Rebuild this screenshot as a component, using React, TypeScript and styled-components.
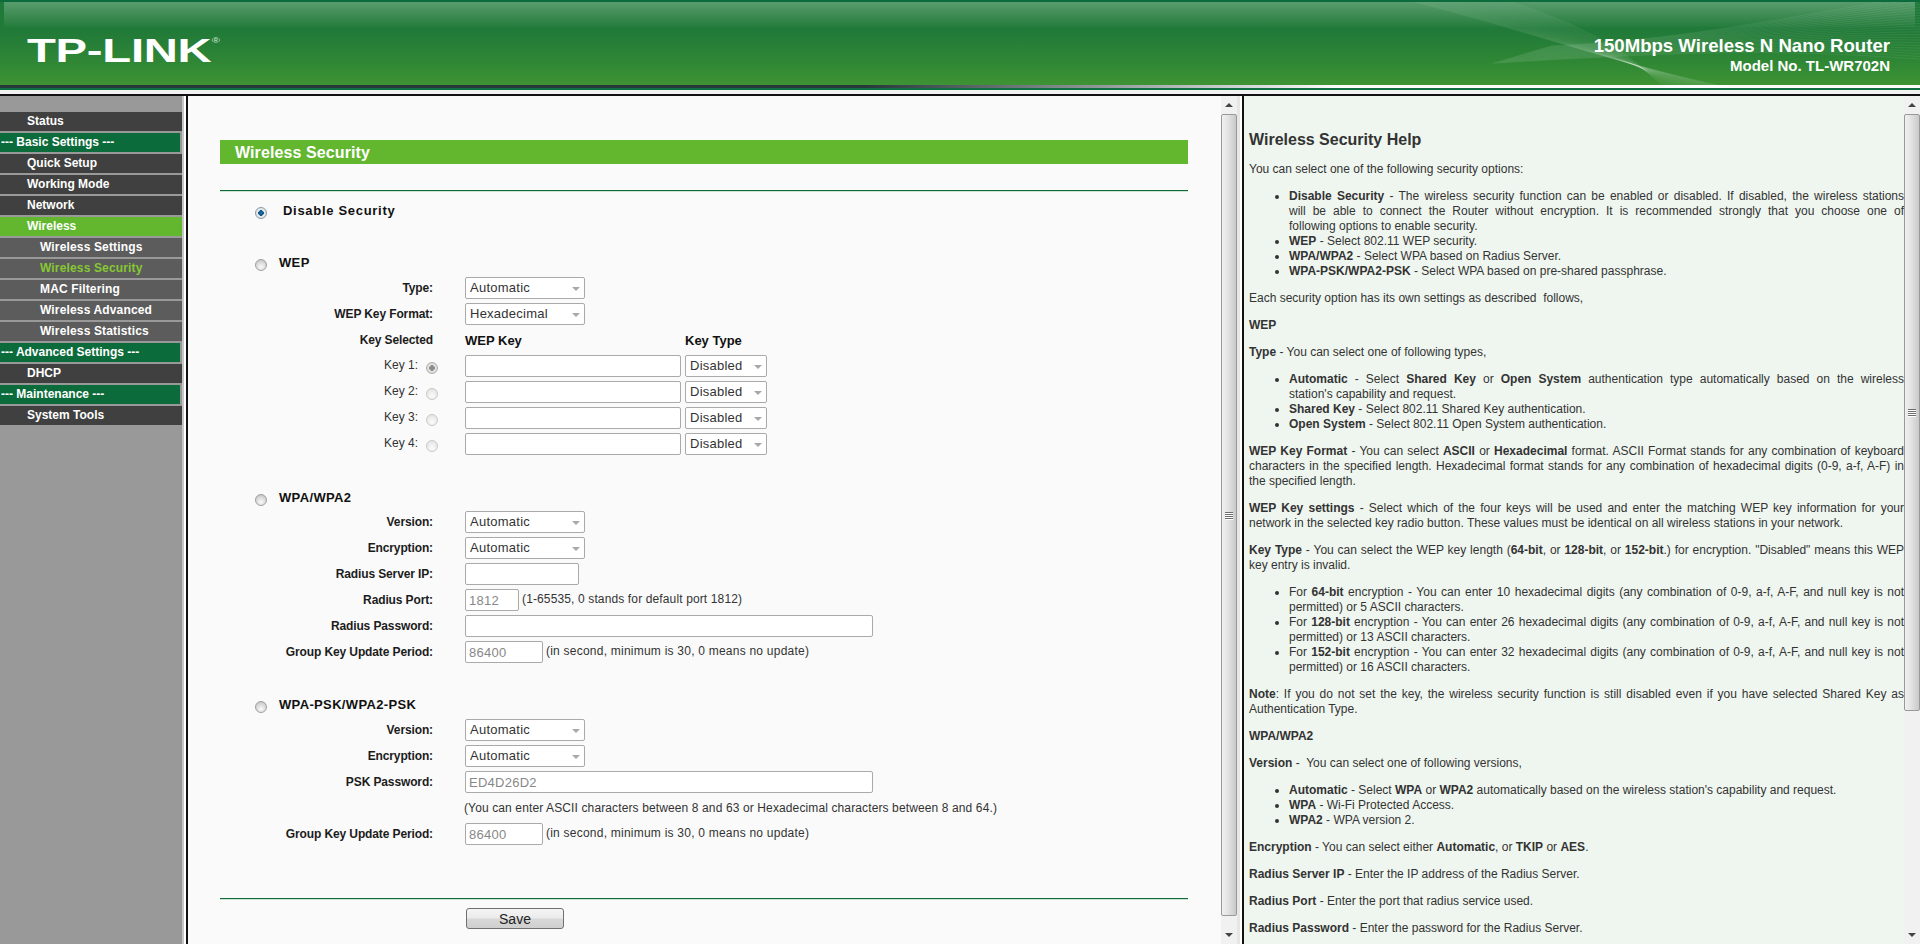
import { createGlobalStyle, styled } from 'styled-components'

const GlobalStyle = createGlobalStyle`
  html, body {
    margin: 0;
    height: 944px;
    overflow: hidden;
    background: #fff;
    font-family: "Liberation Sans", Arial, sans-serif;
    font-size: 12px;
  }
`

const Page = styled.div`
  width: 1920px;
  height: 944px;
  display: flex;
  flex-direction: column;
  overflow: hidden;
`

/* header */
const Banner = styled.header`
  position: relative;
  height: 85px;
  flex: none;
  padding: 0 30px 0 27px;
  display: flex;
  align-items: flex-start;
  justify-content: space-between;
  overflow: hidden;
  background: linear-gradient(#1f7a3a 0, #217a38 30px, #2f8735 60px, #409433 85px);
  border-top: 2px solid #0b6b3c;
  box-sizing: border-box;

  &::before {
    content: '';
    position: absolute;
    top: 0;
    left: 4px;
    right: 5px;
    height: 25px;
    background: linear-gradient(rgba(255, 255, 255, 0.26), rgba(255, 255, 255, 0.02));
  }
`
const Logo = styled.div`
  position: relative;
  margin-top: 29px;
  font-size: 34px;
  line-height: 38px;
  font-weight: 700;
  color: #fff;
  transform: scaleX(1.39);
  transform-origin: left center;
  letter-spacing: -0.2px;

  sup {
    position: absolute;
    left: 133px;
    top: 5px;
    font-size: 8px;
    line-height: 10px;
    font-weight: 400;
    color: #d5e8d5;
  }
`
const Product = styled.div`
  position: relative;
  margin-top: 33px;
  text-align: right;
  color: #fff;
  font-weight: 700;
`
const ProductName = styled.div`
  font-size: 18.6px;
  line-height: 21px;
`
const ModelName = styled.div`
  font-size: 15px;
  line-height: 20px;
`
const Waves = styled.svg`
  position: absolute;
  top: -2px;
  right: 0;
`
const BannerEdge = styled.div`
  height: 9px;
  flex: none;
  background:
    linear-gradient(to right, #26383a 0, #26383a 45%, transparent 70%) 0 0 / 100% 3px no-repeat,
    linear-gradient(#fff 0, #fff 3px, #0f6e42 3px, #0f6e42 5px, #f2f2f2 5px, #f2f2f2 100%);
`
const FrameLine = styled.div`
  height: 2px;
  flex: none;
  background: #111;
`
const Frames = styled.div`
  flex: 1;
  min-height: 0;
  display: flex;
`

/* left menu */
const Menu = styled.nav`
  width: 182px;
  flex: none;
  padding-top: 16px;
  box-sizing: content-box;
  background: #999;
  border-right: 2px solid #c6c6c6;
  margin-right: 2px;
  display: flex;
  flex-direction: column;
  gap: 2px;
`
const MenuItem = styled.div<{ $kind: 'main' | 'group' | 'sub' | 'open' | 'current' }>`
  height: 19px;
  line-height: 19px;
  font-size: 12px;
  font-weight: 700;
  white-space: pre;
  letter-spacing: ${({ $kind }) => ($kind === 'sub' || $kind === 'current' ? '0.15px' : '0')};
  color: ${({ $kind }) => ($kind === 'current' ? '#86c832' : '#fff')};
  padding-left: ${({ $kind }) => ($kind === 'group' ? '1px' : $kind === 'sub' || $kind === 'current' ? '40px' : '27px')};
  margin-right: ${({ $kind }) => ($kind === 'group' ? '2px' : '0')};
  background: ${({ $kind }) =>
    $kind === 'group' ? '#0c6b3b' : $kind === 'open' ? '#62b72f' : $kind === 'main' ? '#404040' : '#5c5c5c'};
`

/* scrollbar, drawn by hand so both frames get the old windows look */
const Scrollbar = styled.div`
  width: 16px;
  flex: none;
  display: flex;
  flex-direction: column;
  background: #f1f1f1;
`
const ArrowBox = styled.div`
  height: 18px;
  flex: none;
  display: flex;
  align-items: center;
  justify-content: center;
`
const Arrow = styled.span<{ $down?: boolean }>`
  width: 0;
  height: 0;
  border-left: 4px solid transparent;
  border-right: 4px solid transparent;
  ${({ $down }) => ($down ? 'border-top: 4px solid #444;' : 'border-bottom: 4px solid #444;')}
`
const Thumb = styled.div<{ $height: number }>`
  height: ${({ $height }) => $height}px;
  flex: none;
  box-sizing: border-box;
  border: 1px solid #999;
  border-radius: 2px;
  background: linear-gradient(to right, #f0f0f0, #e4e4e4 40%, #c9c9c9);
  display: flex;
  flex-direction: column;
  align-items: center;
  justify-content: center;
  gap: 1px;
`
const Grip = styled.span`
  width: 8px;
  height: 1px;
  background: #6d6d6d;
  box-shadow: 0 1px 0 #fff;
`
const Track = styled.div`
  flex: 1;
`

function Bar({ thumb }: { thumb: number }) {
  return (
    <Scrollbar>
      <ArrowBox>
        <Arrow />
      </ArrowBox>
      <Thumb $height={thumb}>
        <Grip />
        <Grip />
        <Grip />
        <Grip />
      </Thumb>
      <Track />
      <ArrowBox>
        <Arrow $down />
      </ArrowBox>
    </Scrollbar>
  )
}

/* main form frame */
const MainFrame = styled.section`
  width: 1054px;
  flex: none;
  display: flex;
  border-left: 2px solid #111;
  background: #fff;
`
const MainScroll = styled.div`
  width: 1033px;
  flex: none;
  height: 848px;
  overflow: hidden;
  box-sizing: border-box;
  background: #fafafa;
  padding: 44px 33px 0 32px;
`
const Sliver = styled.div`
  width: 5px;
  flex: none;
  background: linear-gradient(to right, #e6e6e6 0, #e6e6e6 3px, #fff 3px);
`
const Title = styled.h1`
  margin: 0;
  height: 24px;
  line-height: 26px;
  padding-left: 15px;
  background: #62b72f;
  color: #fff;
  font-size: 16px;
  font-weight: 700;
  letter-spacing: 0.1px;
`
const Rule = styled.div<{ $top: number }>`
  margin-top: ${({ $top }) => $top}px;
  height: 1px;
  background: #0c6b3b;
  border-bottom: 1px solid #cfe2d4;
`
const Head = styled.div<{ $top: number; $gap?: number; $big?: boolean }>`
  margin-top: ${({ $top }) => $top}px;
  height: 20px;
  padding-left: 35px;
  display: flex;
  align-items: center;
  gap: ${({ $gap }) => $gap ?? 12}px;
  font-size: 13px;
  font-weight: 700;
  letter-spacing: ${({ $big }) => ($big ? 0.7 : 0.35)}px;
  color: #111;
`
const Radio = styled.input`
  appearance: none;
  margin: 6px 0 0;
  width: 12px;
  height: 12px;
  flex: none;
  border-radius: 50%;
  border: 1px solid #a0a0a0;
  box-sizing: border-box;
  background: radial-gradient(circle at 50% 70%, #fafafa 0, #d6d6d6 60%, #b8b8b8 100%);

  &:checked {
    border-color: #8a9aa6;
    background: radial-gradient(circle, #1b6fa8 0, #11557f 38%, #e9eef2 42%, #cfd6dc 100%);
  }
  &:disabled {
    border-color: #c9c9c9;
    background: radial-gradient(circle at 50% 70%, #fbfbfb 0, #e8e8e8 70%, #dedede 100%);
  }
  &:disabled:checked {
    border-color: #b0b0b0;
    background: radial-gradient(circle, #8d8d8d 0, #8d8d8d 38%, #e4e4e4 42%, #d0d0d0 100%);
  }
`
const Rows = styled.div<{ $top?: number }>`
  margin-top: ${({ $top }) => $top ?? 4}px;
  display: flex;
  flex-direction: column;
  gap: 4px;
`
const Row = styled.div`
  height: 22px;
  display: grid;
  grid-template-columns: 213px 1fr;
  column-gap: 32px;
  align-items: center;
`
const Label = styled.div`
  margin-top: -1px;
  text-align: right;
  font-weight: 700;
  letter-spacing: -0.12px;
  color: #1c1c1c;
`
const KeyLabel = styled.div`
  display: flex;
  justify-content: flex-end;
  align-items: center;
  gap: 8px;
  margin: -2px -5px 0 0;
  color: #333;

  ${Radio} {
    margin: 6px 0 0;
  }
`
const Fields = styled.div`
  display: flex;
  align-items: center;
  gap: 4px;
  font-size: 12px;
  color: #333;
`
const ColumnHead = styled.div<{ $width: number }>`
  width: ${({ $width }) => $width}px;
  margin-top: 1px;
  font-weight: 700;
  font-size: 13px;
  color: #111;
`
const SelectBox = styled.span<{ $width: number }>`
  position: relative;
  width: ${({ $width }) => $width}px;
  height: 22px;
  flex: none;

  &::after {
    content: '';
    position: absolute;
    right: 5px;
    top: 10px;
    border-left: 4px solid transparent;
    border-right: 4px solid transparent;
    border-top: 4px solid #a8a8a8;
  }
  select {
    appearance: none;
    width: 100%;
    height: 100%;
    box-sizing: border-box;
    border: 1px solid #aaa;
    border-radius: 2px;
    background: #fff;
    padding: 0 0 2px 4px;
    font: 13px "Liberation Sans", Arial, sans-serif;
    letter-spacing: 0.25px;
    color: #333;
    opacity: 1;
  }
`
const TextBox = styled.input<{ $width: number }>`
  width: ${({ $width }) => $width}px;
  height: 22px;
  flex: none;
  box-sizing: border-box;
  border: 1px solid #aaa;
  border-radius: 2px;
  background: #fff;
  padding: 0 3px;
  font: 13px "Liberation Sans", Arial, sans-serif;
  letter-spacing: 0.25px;
  color: #888;
`
const Hint = styled.span<{ $spacing: number; $lift?: number }>`
  white-space: nowrap;
  margin: ${({ $lift }) => -($lift ?? 3)}px 0 0 -1px;
  letter-spacing: ${({ $spacing }) => $spacing}px;
`
const SaveRow = styled.div`
  margin-top: 8px;
  padding-left: 246px;
`
const SaveButton = styled.button`
  width: 98px;
  height: 21px;
  box-sizing: border-box;
  border: 1px solid #707070;
  border-radius: 3px;
  background: linear-gradient(#f4f4f4, #ebebeb 48%, #d8d8d8 52%, #cfcfcf);
  font: 14px "Liberation Sans", Arial, sans-serif;
  color: #222;
  padding: 0;
`

function Select({ value, width = 120 }: { value: string; width?: number }) {
  return (
    <SelectBox $width={width}>
      <select defaultValue={value}>
        <option>{value}</option>
      </select>
    </SelectBox>
  )
}

const keyRows = ['Key 1:', 'Key 2:', 'Key 3:', 'Key 4:']

/* help frame */
const HelpFrame = styled.aside`
  flex: 1;
  min-width: 0;
  display: flex;
  border-left: 2px solid #111;
`
const HelpBody = styled.div`
  flex: 1;
  min-width: 0;
  height: 848px;
  overflow: hidden;
  box-sizing: border-box;
  background: #eff6ef;
  padding: 34px 0 0 5px;
  color: #333;
  font-size: 12px;
  line-height: 15px;
`
const HelpTitle = styled.h2`
  margin: 0 0 12px;
  font-size: 16px;
  line-height: 20px;
  font-weight: 700;
  color: #333;
`
const Para = styled.p`
  margin: 0 0 12px;
  text-align: justify;
`
const List = styled.ul`
  margin: 0 0 12px;
  padding-left: 40px;
  text-align: justify;
`
/* the original breaks these lines a word earlier, its text runs a little wider */
const FullLine = styled.span`
  display: block;
  text-align-last: justify;
`

const waveA = Array.from({ length: 24 }, (_, i) => {
  const n = i * 5
  return `M${30 + n * 0.9} -4 C ${150 + n} ${24 + n * 0.12}, ${240 + n * 0.3} ${60 + n * 0.05}, ${370 - n * 0.55} ${88}`
})
const waveB = Array.from({ length: 24 }, (_, i) => {
  const n = i * 5
  return `M${560} ${n * 0.55 - 4} C ${440 - n * 0.2} ${14 + n * 0.3}, ${330} ${40 + n * 0.1}, ${190 - n * 0.5} ${46 + n * 0.15}`
})

export default function App() {
  return (
    <Page>
      <GlobalStyle />
      <Banner>
        <Logo>
          TP-LINK<sup>®</sup>
        </Logo>
        <Waves width="560" height="85" viewBox="0 0 560 85" fill="none">
          {waveA.map((d) => (
            <path key={d} d={d} stroke="#fff" strokeOpacity="0.13" strokeWidth="0.6" />
          ))}
          {waveB.map((d) => (
            <path key={d} d={d} stroke="#fff" strokeOpacity="0.13" strokeWidth="0.6" />
          ))}
        </Waves>
        <Product>
          <ProductName>150Mbps Wireless N Nano Router</ProductName>
          <ModelName>Model No. TL-WR702N</ModelName>
        </Product>
      </Banner>
      <BannerEdge />
      <FrameLine />
      <Frames>
        <Menu>
          <MenuItem $kind="main">Status</MenuItem>
          <MenuItem $kind="group">--- Basic Settings ---</MenuItem>
          <MenuItem $kind="main">Quick Setup</MenuItem>
          <MenuItem $kind="main">Working Mode</MenuItem>
          <MenuItem $kind="main">Network</MenuItem>
          <MenuItem $kind="open">Wireless</MenuItem>
          <MenuItem $kind="sub">Wireless Settings</MenuItem>
          <MenuItem $kind="current">Wireless Security</MenuItem>
          <MenuItem $kind="sub">MAC Filtering</MenuItem>
          <MenuItem $kind="sub">Wireless Advanced</MenuItem>
          <MenuItem $kind="sub">Wireless Statistics</MenuItem>
          <MenuItem $kind="group">--- Advanced Settings ---</MenuItem>
          <MenuItem $kind="main">DHCP</MenuItem>
          <MenuItem $kind="group">--- Maintenance ---</MenuItem>
          <MenuItem $kind="main">System Tools</MenuItem>
        </Menu>

        <MainFrame>
          <MainScroll>
            <Title>Wireless Security</Title>
            <Rule $top={26} />
            <Head $top={8} $gap={16} $big>
              <Radio type="radio" name="sec" defaultChecked />
              <span>Disable Security</span>
            </Head>
            <Head $top={32}>
              <Radio type="radio" name="sec" />
              <span>WEP</span>
            </Head>
            <Rows $top={5}>
              <Row>
                <Label>Type:</Label>
                <Fields>
                  <Select value="Automatic" />
                </Fields>
              </Row>
              <Row>
                <Label>WEP Key Format:</Label>
                <Fields>
                  <Select value="Hexadecimal" />
                </Fields>
              </Row>
              <Row>
                <Label>Key Selected</Label>
                <Fields>
                  <ColumnHead $width={216}>WEP Key</ColumnHead>
                  <ColumnHead $width={82}>Key Type</ColumnHead>
                </Fields>
              </Row>
              {keyRows.map((key, i) => (
                <Row key={key}>
                  <KeyLabel>
                    {key}
                    <Radio type="radio" name="key" disabled defaultChecked={i === 0} />
                  </KeyLabel>
                  <Fields>
                    <TextBox $width={216} />
                    <Select value="Disabled" width={82} />
                  </Fields>
                </Row>
              ))}
            </Rows>

            <Head $top={32}>
              <Radio type="radio" name="sec" />
              <span>WPA/WPA2</span>
            </Head>
            <Rows>
              <Row>
                <Label>Version:</Label>
                <Fields>
                  <Select value="Automatic" />
                </Fields>
              </Row>
              <Row>
                <Label>Encryption:</Label>
                <Fields>
                  <Select value="Automatic" />
                </Fields>
              </Row>
              <Row>
                <Label>Radius Server IP:</Label>
                <Fields>
                  <TextBox $width={114} />
                </Fields>
              </Row>
              <Row>
                <Label>Radius Port:</Label>
                <Fields>
                  <TextBox $width={54} defaultValue="1812" />
                  <Hint $spacing={0.13}>(1-65535, 0 stands for default port 1812)</Hint>
                </Fields>
              </Row>
              <Row>
                <Label>Radius Password:</Label>
                <Fields>
                  <TextBox $width={408} />
                </Fields>
              </Row>
              <Row>
                <Label>Group Key Update Period:</Label>
                <Fields>
                  <TextBox $width={78} defaultValue="86400" />
                  <Hint $spacing={0.23}>(in second, minimum is 30, 0 means no update)</Hint>
                </Fields>
              </Row>
            </Rows>

            <Head $top={31}>
              <Radio type="radio" name="sec" />
              <span>WPA-PSK/WPA2-PSK</span>
            </Head>
            <Rows $top={5}>
              <Row>
                <Label>Version:</Label>
                <Fields>
                  <Select value="Automatic" />
                </Fields>
              </Row>
              <Row>
                <Label>Encryption:</Label>
                <Fields>
                  <Select value="Automatic" />
                </Fields>
              </Row>
              <Row>
                <Label>PSK Password:</Label>
                <Fields>
                  <TextBox $width={408} defaultValue="ED4D26D2" />
                </Fields>
              </Row>
              <Row>
                <span />
                <Fields>
                  <Hint $spacing={0.12} $lift={1}>
                    (You can enter ASCII characters between 8 and 63 or Hexadecimal characters between 8 and 64.)
                  </Hint>
                </Fields>
              </Row>
              <Row>
                <Label>Group Key Update Period:</Label>
                <Fields>
                  <TextBox $width={78} defaultValue="86400" />
                  <Hint $spacing={0.23}>(in second, minimum is 30, 0 means no update)</Hint>
                </Fields>
              </Row>
            </Rows>
            <Rule $top={53} />
            <SaveRow>
              <SaveButton type="button">Save</SaveButton>
            </SaveRow>
          </MainScroll>
          <Bar thumb={802} />
          <Sliver />
        </MainFrame>

        <HelpFrame>
          <HelpBody>
            <HelpTitle>Wireless Security Help</HelpTitle>
            <Para>You can select one of the following security options:</Para>
            <List>
              <li>
                <FullLine>
                  <b>Disable Security</b> - The wireless security function can be enabled or disabled. If disabled, the wireless stations
                </FullLine>
                <FullLine>will be able to connect the Router without encryption. It is recommended strongly that you choose one of</FullLine>
                following options to enable security.
              </li>
              <li>
                <b>WEP</b> - Select 802.11 WEP security.
              </li>
              <li>
                <b>WPA/WPA2</b> - Select WPA based on Radius Server.
              </li>
              <li>
                <b>WPA-PSK/WPA2-PSK</b> - Select WPA based on pre-shared passphrase.
              </li>
            </List>
            <Para>Each security option has its own settings as described&nbsp; follows,</Para>
            <Para>
              <b>WEP</b>
            </Para>
            <Para>
              <b>Type</b> - You can select one of following types,
            </Para>
            <List>
              <li>
                <FullLine>
                  <b>Automatic</b> - Select <b>Shared Key</b> or <b>Open System</b> authentication type automatically based on the wireless
                </FullLine>
                station's capability and request.
              </li>
              <li>
                <b>Shared Key</b> - Select 802.11 Shared Key authentication.
              </li>
              <li>
                <b>Open System</b> - Select 802.11 Open System authentication.
              </li>
            </List>
            <Para>
              <b>WEP Key Format</b> - You can select <b>ASCII</b> or <b>Hexadecimal</b> format. ASCII Format stands for any combination of keyboard characters in the specified length. Hexadecimal format stands for any combination of hexadecimal digits (0-9, a-f, A-F) in the specified length.
            </Para>
            <Para>
              <b>WEP Key settings</b> - Select which of the four keys will be used and enter the matching WEP key information for your network in the selected key radio button. These values must be identical on all wireless stations in your network.
            </Para>
            <Para>
              <b>Key Type</b> - You can select the WEP key length (<b>64-bit</b>, or <b>128-bit</b>, or <b>152-bit</b>.) for encryption. "Disabled" means this WEP key entry is invalid.
            </Para>
            <List>
              <li>
                For <b>64-bit</b> encryption - You can enter 10 hexadecimal digits (any combination of 0-9, a-f, A-F, and null key is not permitted) or 5 ASCII characters.
              </li>
              <li>
                For <b>128-bit</b> encryption - You can enter 26 hexadecimal digits (any combination of 0-9, a-f, A-F, and null key is not permitted) or 13 ASCII characters.
              </li>
              <li>
                For <b>152-bit</b> encryption - You can enter 32 hexadecimal digits (any combination of 0-9, a-f, A-F, and null key is not permitted) or 16 ASCII characters.
              </li>
            </List>
            <Para>
              <b>Note</b>: If you do not set the key, the wireless security function is still disabled even if you have selected Shared Key as Authentication Type.
            </Para>
            <Para>
              <b>WPA/WPA2</b>
            </Para>
            <Para>
              <b>Version</b> -&nbsp; You can select one of following versions,
            </Para>
            <List>
              <li>
                <b>Automatic</b> - Select <b>WPA</b> or <b>WPA2</b> automatically based on the wireless station's capability and request.
              </li>
              <li>
                <b>WPA</b> - Wi-Fi Protected Access.
              </li>
              <li>
                <b>WPA2</b> - WPA version 2.
              </li>
            </List>
            <Para>
              <b>Encryption</b> - You can select either <b>Automatic</b>, or <b>TKIP</b> or <b>AES</b>.
            </Para>
            <Para>
              <b>Radius Server IP</b> - Enter the IP address of the Radius Server.
            </Para>
            <Para>
              <b>Radius Port</b> - Enter the port that radius service used.
            </Para>
            <Para>
              <b>Radius Password</b> - Enter the password for the Radius Server.
            </Para>
          </HelpBody>
          <Bar thumb={597} />
        </HelpFrame>
      </Frames>
    </Page>
  )
}
